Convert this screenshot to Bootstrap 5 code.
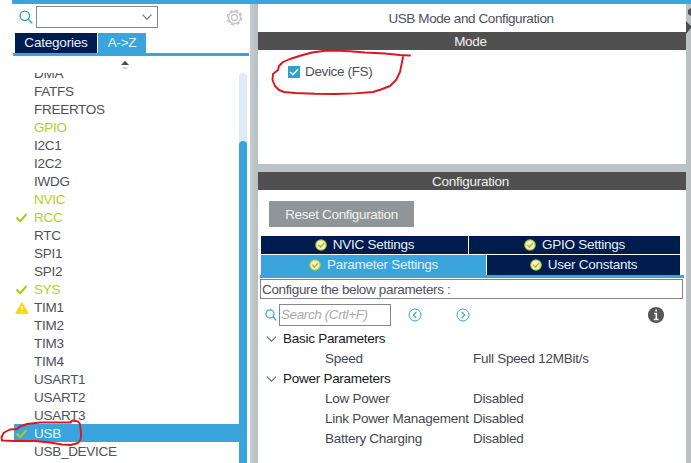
<!DOCTYPE html>
<html lang="en">
<head>
<meta charset="utf-8">
<title>USB Mode and Configuration</title>
<link href="https://cdn.jsdelivr.net/npm/bootstrap@5.3.0/dist/css/bootstrap.min.css" rel="stylesheet">
<style>
:root{--sky:#39a5dc;--navy:#001b4e;--bar:#4f504f;--gutter:#bcc2c6;--lime:#b4d21a}
body{width:691px;height:463px;overflow:hidden;font:13.5px/18px "Liberation Sans",Arial,sans-serif;letter-spacing:-.27px;color:#505058;background:#fff}
svg{display:block;flex:none}
.app-shell{margin-left:12px;height:463px;border-top:4px solid var(--sky)}
.side{width:238px}
.finder{height:29px;padding:2px 7px 5px 7px}
.combo{width:122px;height:22px;border:1px solid #85888b;margin-left:3px;padding-right:5px}
.side-tabs{height:20px;margin-left:3px;color:#e9f2fa;line-height:20px}
.tab-cat{width:82px;background:var(--navy);letter-spacing:-.2px}
.tab-az{width:48px;background:var(--sky);margin-left:1px}
.side-rule{height:3px;background:var(--sky);margin:0 1px}
.sorter{height:17px;padding:4px 0 0 108px}
.ip-list{height:390px;margin-left:2px;letter-spacing:-.28px}
.ip-items{width:225px;overflow:hidden}
.ip-items ul{margin-top:-9px}
.ip-items li{height:18px;padding:2px 0 0 1px}
.ip-ico{width:19px}
.on{color:var(--lime)}
.picked{background:var(--sky);color:#eef7fc}
.track{width:8px;background:#dcebf5;border-radius:4px 4px 0 0;padding-top:68px}
.thumb{height:100%;background:var(--sky);border-radius:4px 4px 0 0}
.split{width:8px;background:linear-gradient(90deg,#c6cbce,#b6bec3)}
.main{width:428px;background:var(--gutter)}
.edge{width:5px;background:#b9c3c4}
.heading{height:28px;line-height:29px;letter-spacing:-.4px;background:#fff;padding-right:2px}
.section-bar{height:18px;background:var(--bar);color:#f2f2f2;line-height:19px;padding-right:3px}
.mode-body{height:114px;background:#fff;padding:13px 0 0 30px;letter-spacing:-.35px}
.box{width:12px;height:12px;background:#32a0cf;margin-right:5px}
.config-pane{margin-top:8px;background:#fff}
.reset{width:145px;height:26px;margin:11px 0 0 11px;border:0;border-radius:0;background:#8f9599;color:#f0f2f3;font-size:13.5px;line-height:27px;padding:0;letter-spacing:-.35px}
.cfg-tabs{margin:9px 6px 0 3px;color:#e6f0f8;letter-spacing:-.24px}
.cfg-tabs .navy{background:var(--navy)}
.cfg-tabs .sky{background:var(--sky)}
.cfg-tabs svg{margin-right:6px}
.tab-nvic{width:207px}
.tab-param{width:225px}
.r1{height:18px;gap:1px}.r2{height:20px;gap:1px;margin-top:1px}
.cfg-rule{height:3px;margin:0 2px 0 2px;background:var(--sky)}
.note{height:20px;border:1px solid #818487;margin:1px 3px 0 2px;line-height:19px;padding-left:1px;letter-spacing:-.35px}
.tools{height:30px;padding:1px 21px 0 7px}
.prev-hit{margin-left:17px}
.next-hit{margin-left:34px}
.query{width:112px;height:22px;border:1px solid #85888b;font-style:italic;color:#aaa;line-height:20px;padding-left:1px;margin-left:2px;letter-spacing:-.4px}
.prm{height:20px;line-height:20px}
.grp{padding-left:8px;color:#17181a}
.grp svg{margin-right:6px}
.leafrow{padding-left:67px;color:#46474d}
.leafrow span:first-child{width:148px;white-space:nowrap}
.ink{left:0;top:0;pointer-events:none}
</style>
</head>
<body>
<svg class="d-none"><defs>
<symbol id="ok" viewBox="0 0 12 12"><circle cx="6" cy="6" r="5.8" fill="#a9cb2c"/><circle cx="6" cy="6" r="4.6" fill="#eef2c4"/><path d="M3.2 5.8 5.5 8.1 9 4.3" fill="none" stroke="#b8b445" stroke-width="1.5"/></symbol>
<symbol id="tick" viewBox="0 0 12 10"><path d="M1 4.6 4.7 8.2 11 1" fill="none" stroke="#a8cc1c" stroke-width="2.1"/></symbol>
<symbol id="lens" viewBox="0 0 14 14"><circle cx="5.8" cy="5.8" r="4.7" fill="none" stroke="#2f9fc6" stroke-width="1.4"/><path d="M9.2 9.2 13.3 13.3" stroke="#2f9fc6" stroke-width="1.5"/></symbol>
<symbol id="chev" viewBox="0 0 10 6"><path d="M.5.6 5 5.1 9.5.6" fill="none" stroke="#6b6e72" stroke-width="1.1"/></symbol>
</defs></svg>
<div class="app-shell d-flex">
  <aside class="side d-flex flex-column">
    <div class="finder d-flex align-items-center">
      <svg width="14" height="14"><use href="#lens"/></svg>
      <div class="combo d-flex align-items-center justify-content-end"><svg width="10" height="6"><use href="#chev"/></svg></div>
      <svg class="ms-auto" width="17" height="17" viewBox="0 0 17 17" fill="none" stroke="#c3c5c9"><circle cx="8.500" cy="8.500" r="7" stroke-width="1.8" stroke-dasharray="3.4 2.1"/><circle cx="8.500" cy="8.500" r="5.900" stroke-width="1.1"/><circle cx="8.500" cy="8.500" r="3" stroke-width="1.3"/></svg>
    </div>
    <div class="side-tabs d-flex text-center"><div class="tab-cat">Categories</div><div class="tab-az">A-&gt;Z</div></div>
    <div class="side-rule"></div>
    <div class="sorter"><svg width="10" height="11" viewBox="0 0 10 11"><path d="M1 5 5 .8 9 5z" fill="#4b4c50"/><path d="M2 7h6L5 10z" fill="#d0d1d3"/></svg></div>
    <div class="ip-list d-flex">
      <div class="ip-items">
        <ul class="list-unstyled mb-0">
          <li class="d-flex align-items-center"><span class="ip-ico"></span>DMA</li>
          <li class="d-flex align-items-center"><span class="ip-ico"></span>FATFS</li>
          <li class="d-flex align-items-center"><span class="ip-ico"></span>FREERTOS</li>
          <li class="d-flex align-items-center on"><span class="ip-ico"></span>GPIO</li>
          <li class="d-flex align-items-center"><span class="ip-ico"></span>I2C1</li>
          <li class="d-flex align-items-center"><span class="ip-ico"></span>I2C2</li>
          <li class="d-flex align-items-center"><span class="ip-ico"></span>IWDG</li>
          <li class="d-flex align-items-center on"><span class="ip-ico"></span>NVIC</li>
          <li class="d-flex align-items-center on"><span class="ip-ico"><svg width="13" height="10"><use href="#tick"/></svg></span>RCC</li>
          <li class="d-flex align-items-center"><span class="ip-ico"></span>RTC</li>
          <li class="d-flex align-items-center"><span class="ip-ico"></span>SPI1</li>
          <li class="d-flex align-items-center"><span class="ip-ico"></span>SPI2</li>
          <li class="d-flex align-items-center on"><span class="ip-ico"><svg width="13" height="10"><use href="#tick"/></svg></span>SYS</li>
          <li class="d-flex align-items-center"><span class="ip-ico"><svg width="14" height="12" viewBox="0 0 14 12"><path d="M7 .8 13.2 11.3H.8z" fill="#f7d708" stroke="#f7d708" stroke-linejoin="round"/><path d="M7 4v4M7 9.2v1.3" stroke="#fff" stroke-width="1.2"/></svg></span>TIM1</li>
          <li class="d-flex align-items-center"><span class="ip-ico"></span>TIM2</li>
          <li class="d-flex align-items-center"><span class="ip-ico"></span>TIM3</li>
          <li class="d-flex align-items-center"><span class="ip-ico"></span>TIM4</li>
          <li class="d-flex align-items-center"><span class="ip-ico"></span>USART1</li>
          <li class="d-flex align-items-center"><span class="ip-ico"></span>USART2</li>
          <li class="d-flex align-items-center"><span class="ip-ico"></span>USART3</li>
          <li class="d-flex align-items-center picked"><span class="ip-ico"><svg width="13" height="10"><use href="#tick"/></svg></span>USB</li>
          <li class="d-flex align-items-center"><span class="ip-ico"></span>USB_DEVICE</li>
        </ul>
      </div>
      <div class="track"><div class="thumb"></div></div>
    </div>
  </aside>
  <div class="split"></div>
  <main class="main d-flex flex-column">
    <div class="heading text-center"><span>USB Mode and Configuration</span></div>
    <div class="section-bar text-center">Mode</div>
    <div class="mode-body d-flex align-items-start">
      <label class="d-flex align-items-center"><span class="box"><svg width="12" height="12" viewBox="0 0 12 12"><path d="M2.2 6 4.8 8.7 10 3.3" fill="none" stroke="#fff" stroke-width="1.5"/></svg></span>Device (FS)</label>
    </div>
    <section class="config-pane flex-grow-1">
      <div class="section-bar text-center">Configuration</div>
      <button class="reset btn d-block">Reset Configuration</button>
      <div class="cfg-tabs">
        <div class="r1 d-flex">
          <div class="tab-nvic navy d-flex align-items-center justify-content-center"><svg width="12" height="12"><use href="#ok"/></svg>NVIC Settings</div>
          <div class="navy d-flex align-items-center justify-content-center flex-grow-1"><svg width="12" height="12"><use href="#ok"/></svg>GPIO Settings</div>
        </div>
        <div class="r2 d-flex">
          <div class="tab-param sky d-flex align-items-center justify-content-center"><svg width="12" height="12"><use href="#ok"/></svg>Parameter Settings</div>
          <div class="navy d-flex align-items-center justify-content-center flex-grow-1"><svg width="12" height="12"><use href="#ok"/></svg>User Constants</div>
        </div>
      </div>
      <div class="cfg-rule"></div>
      <div class="note">Configure the below parameters :</div>
      <div class="tools d-flex align-items-center">
        <svg width="12" height="12"><use href="#lens"/></svg>
        <div class="query">Search (Crtl+F)</div>
        <svg class="prev-hit" width="14" height="14" viewBox="0 0 14 14" fill="none" stroke="#3ba5c9"><circle cx="7" cy="7" r="6"/><path d="M8.3 4 5.3 7l3 3" stroke-width="1.2"/></svg>
        <svg class="next-hit" width="14" height="14" viewBox="0 0 14 14" fill="none" stroke="#3ba5c9"><circle cx="7" cy="7" r="6"/><path d="M5.7 4l3 3-3 3" stroke-width="1.2"/></svg>
        <svg class="ms-auto" width="18" height="18" viewBox="0 0 18 18"><circle cx="9" cy="9" r="8.1" fill="#555658"/><path d="M9.2 3.6v2M7 7.5h2.3v5.8M6.8 13.5h4.8" fill="none" stroke="#fff" stroke-width="1.6"/></svg>
      </div>
      <div class="prm grp d-flex align-items-center"><svg width="11" height="6"><use href="#chev"/></svg>Basic Parameters</div>
      <div class="prm leafrow d-flex"><span>Speed</span><span>Full Speed 12MBit/s</span></div>
      <div class="prm grp d-flex align-items-center"><svg width="11" height="6"><use href="#chev"/></svg>Power Parameters</div>
      <div class="prm leafrow d-flex"><span>Low Power</span><span>Disabled</span></div>
      <div class="prm leafrow d-flex"><span>Link Power Management</span><span>Disabled</span></div>
      <div class="prm leafrow d-flex"><span>Battery Charging</span><span>Disabled</span></div>
    </section>
  </main>
  <div class="edge"><svg width="5" height="32" viewBox="0 0 5 32" fill="#4b4f52"><path d="M5 4 2 6v4l3 2zM0 17l5 5v2l-5 6z"/></svg></div>
</div>
<!-- hand-drawn annotations over the interface -->
<svg class="ink position-absolute" width="691" height="463" fill="none" stroke="#e0141c" stroke-width="1.9" stroke-linejoin="round" stroke-linecap="round">
  <path d="M410 55.500 400 55 385 53.500 365 52.500 350 51.200 335 50.600 325 50.800 312 52.500 301 55.500 290 59 283 62 279 66 278 70 273 74 272.500 80 275 86 279 90 284 92 295 93 315 93.800 335 94 355 93.400 373 92 381 89.500 390 86 396 80 400 72 403 57"/>
  <path d="M71 421.500 72.500 420.500 78 421.500 80 424 81 434 80.500 440 78 443 71 445 62 444.500 50 442.500 35 441 15 441 2 440.500 1.500 437 4 432.500 10 429.500 17 429 20 426.500 27 424 40 422.500 62 422.500 71 422.500z"/>
</svg>
<script src="https://cdn.jsdelivr.net/npm/bootstrap@5.3.0/dist/js/bootstrap.bundle.min.js"></script>
</body>
</html>
